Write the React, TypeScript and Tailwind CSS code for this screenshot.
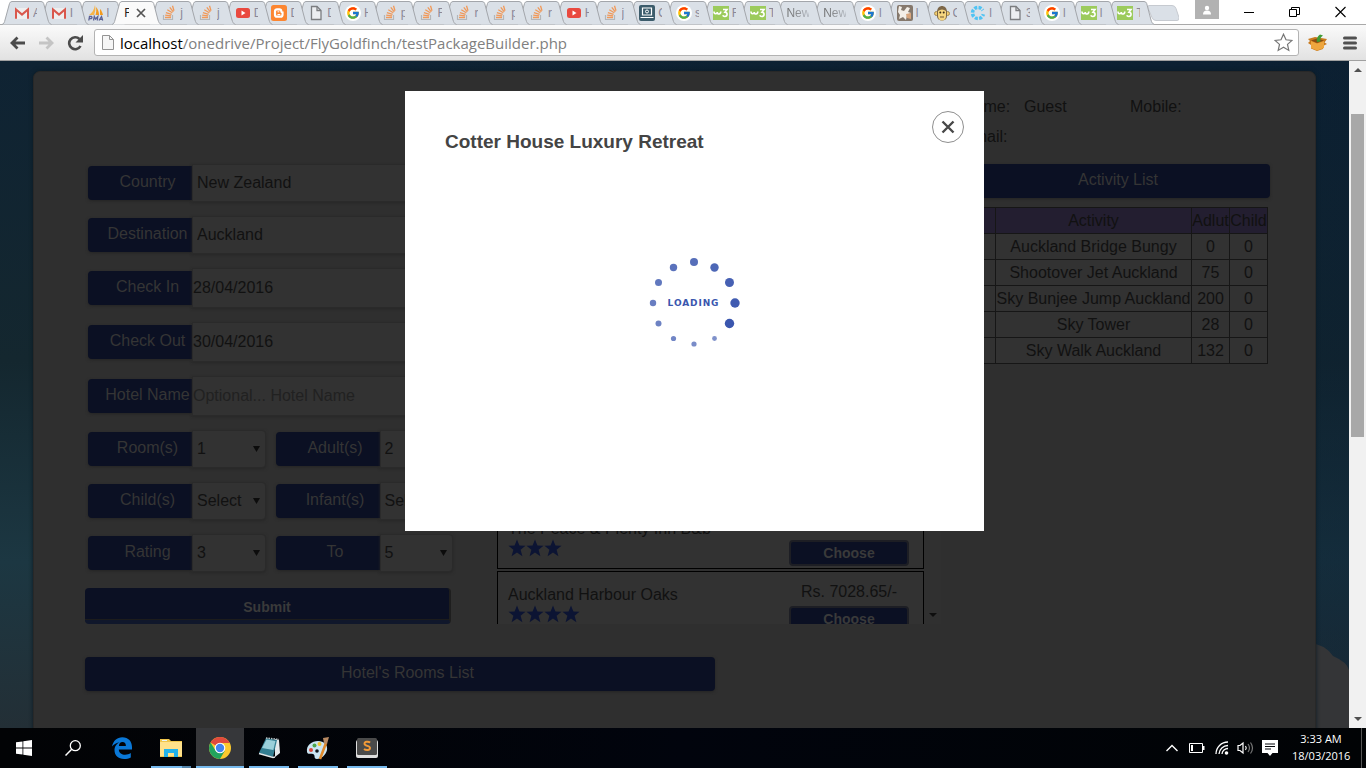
import React from "react";
import { FcGoogle } from "react-icons/fc";

/* ---------- favicons ---------- */

function GmailIcon() {
  return (
    <svg width="16" height="16" viewBox="0 0 16 16">
      <rect x="1" y="3" width="14" height="11" rx="1" fill="#eeeeee" />
      <path d="M2 13.800V4.500L8 9.600l6-5.100v9.300" fill="none" stroke="#d9574c" strokeWidth="2" />
    </svg>
  );
}

function PmaIcon() {
  return (
    <svg width="16" height="16" viewBox="0 0 16 16">
      <path d="M7 0c1 4 0 7-1 10H1c3-2 5-5 6-10z" fill="#f6b44a" />
      <path d="M8 2c2 2 3 5 3 8H7.500c.8-2 1-5 .5-8zM12 4c1.500 1 2.500 4 3 6h-3z" fill="#f39a1e" />
      <path d="M.8 15.500l.7-4h2q1.200 1-.3 2.200H1.500M5.500 15.500l.8-4 1.300 2.500 2.200-2.500-.5 4M11 15.500l2.500-4 1.200 4M12 14.300h2.500" fill="none" stroke="#5c6296" strokeWidth="1.300" />
    </svg>
  );
}

function StackIcon() {
  return (
    <svg width="16" height="16" viewBox="0 0 16 16">
      <path d="M2.500 10v4.500h9V10" fill="none" stroke="#b4b6b9" strokeWidth="1.200" />
      <path d="M4 12.500h6M4.200 10.200l5.900.6M4.900 7.600l5.700 1.700M6.300 4.800l5 3M8.800 2.300l3.500 4.500M11.500.7l1.500 5" fill="none" stroke="#f0995a" strokeWidth="1.300" />
    </svg>
  );
}

function YoutubeIcon() {
  return (
    <svg width="16" height="16" viewBox="0 0 16 16">
      <rect x="1" y="3" width="14" height="10" rx="2.500" fill="#e9493f" />
      <path d="M6.500 5.500v5l4-2.500z" fill="#fff" />
    </svg>
  );
}

function BloggerIcon() {
  return (
    <svg width="16" height="16" viewBox="0 0 16 16">
      <rect width="16" height="16" rx="2.500" fill="#fc8631" />
      <path d="M6 4.300h2.300a2 2 0 0 1 2 2c0 1 .3 1 1.200 1.200v2.200a2 2 0 0 1-2 2H6a2 2 0 0 1-2-2V6.300a2 2 0 0 1 2-2z" fill="none" stroke="#fff" strokeWidth="2.200" />
      <path d="M6.500 6.800h1.800M6.500 9.500h2.800" stroke="#fff" strokeWidth="1" />
    </svg>
  );
}

function PageIcon() {
  return (
    <svg width="16" height="16" viewBox="0 0 16 16">
      <path d="M3.500 1.500h5.500l4 4v9H3.500z" fill="#eceef1" stroke="#7b7d80" strokeWidth="1.300" />
      <path d="M9 1.500v4h4" fill="none" stroke="#7b7d80" strokeWidth="1.300" />
    </svg>
  );
}

function GoogleIcon() {
  return (
    <span className="flex size-4 shrink-0 items-center justify-center rounded-full bg-white">
      <FcGoogle size={14} />
    </span>
  );
}

function LaptopIcon() {
  return (
    <svg width="16" height="16" viewBox="0 0 16 16">
      <rect width="16" height="16" rx="2" fill="#3c5c6b" />
      <path d="M3.500 3h9v7h-9zM1.500 12.500h13" fill="none" stroke="#fff" strokeWidth="1.200" />
      <circle cx="8" cy="6.500" r="1.500" fill="none" stroke="#fff" />
    </svg>
  );
}

function W3Icon() {
  return (
    <svg width="16" height="16" viewBox="0 0 16 16">
      <rect y="1" width="16" height="14" fill="#9ccb5c" />
      <path d="M1 6.500c0 3 3 3 3.300.5 0 3 3.500 2.500 3.500-.5M10 4.500h4L12 7.200c2.800 0 2.800 4.300-.2 4.300-1.200 0-1.800-.5-2-1.200" fill="none" stroke="#fff" strokeWidth="1.600" />
    </svg>
  );
}

function PawIcon() {
  return (
    <svg width="16" height="16" viewBox="0 0 16 16">
      <rect width="16" height="16" rx="2" fill="#85786c" />
      <path d="M2 1l3 1-1 3 3 1 3-4 3 1-2 4 3 1-4 2-1 5-3-3-4 2 1-4-2-3z" fill="#f4efe8" />
      <path d="M9 9l5-1v6l-4-1z" fill="#d8a57c" />
    </svg>
  );
}

function MonkeyIcon() {
  return (
    <svg width="16" height="16" viewBox="0 0 16 16">
      <circle cx="2.500" cy="8.500" r="2" fill="#f1cd6c" stroke="#a48a55" />
      <circle cx="13.500" cy="8.500" r="2" fill="#f1cd6c" stroke="#a48a55" />
      <path d="M3 7c0-8 10-8 10 0v4c0 6-10 6-10 0z" fill="#7d6748" />
      <path d="M4 6q4-3 8 0v5c0 6-8 6-8 0z" fill="#f6d67e" />
      <circle cx="6.300" cy="7.500" r="1" fill="#3b2d1b" />
      <circle cx="9.700" cy="7.500" r="1" fill="#3b2d1b" />
      <path d="M6 12h4" stroke="#6d5535" />
    </svg>
  );
}

function DotsIcon() {
  return (
    <svg width="16" height="16" viewBox="0 0 16 16">
      <circle cx="8" cy="8" r="5.500" fill="none" stroke="#4fc3f3" strokeWidth="3.500" strokeDasharray="3 1.300" />
      <path d="M9 8l7-5v7z" fill="#dae0e7" />
    </svg>
  );
}

type Kind = "gmail" | "pma" | "so" | "yt" | "blog" | "page" | "google" | "laptop" | "w3" | "paw" | "monkey" | "dots" | "none";

const FAVICONS: Record<Kind, React.ReactNode> = {
  gmail: <GmailIcon />,
  pma: <PmaIcon />,
  so: <StackIcon />,
  yt: <YoutubeIcon />,
  blog: <BloggerIcon />,
  page: <PageIcon />,
  google: <GoogleIcon />,
  laptop: <LaptopIcon />,
  w3: <W3Icon />,
  paw: <PawIcon />,
  monkey: <MonkeyIcon />,
  dots: <DotsIcon />,
  none: null,
};

const TABS: [Kind, string, boolean?][] = [
  ["gmail", "A"], ["gmail", "I"], ["pma", "l"], ["none", "F", true],
  ["so", "j"], ["so", "j"], ["yt", "D"], ["blog", "D"], ["page", "D"], ["google", "H"],
  ["so", "p"], ["so", "F"], ["so", "r"], ["so", "p"], ["so", "r"], ["yt", "H"], ["so", "j"],
  ["laptop", "C"], ["google", "s"], ["w3", "F"], ["w3", "T"], ["none", "New"], ["none", "New"],
  ["google", "l"], ["paw", "l"], ["monkey", "C"], ["dots", "l"], ["page", "3"], ["google", "l"],
  ["w3", "l"], ["w3", "T"],
];

function TabStrip() {
  return (
    <div className="flex h-6 shrink-0 bg-white pl-[2px]">
      <div className="flex min-w-0 flex-1" role="tablist">
        {TABS.map(([kind, title, active], i) => (
          <div
            key={i}
            role="tab"
            aria-selected={!!active}
            className="relative h-6 min-w-0 flex-1"
            style={{ zIndex: active ? 50 : 40 - i }}
          >
            <svg className="absolute top-0 left-0" width="50" height="25" viewBox="0 0 50 25">
              <path
                d="M0 24.500 C2 24 2.500 22 3 20 L7.500 3.500 Q8.200 1.500 10 1.500 H39 Q41 1.500 41.700 3.500 L46 20 C46.600 22 47.500 24 49.500 24.500"
                fill={active ? "#fafafa" : "#dae0e7"}
                stroke="#a3a6ab"
              />
            </svg>
            <div className="relative flex h-6 items-center gap-[3px] pt-[2px] pl-3">
              {FAVICONS[kind]}
              {active ? (
                <>
                  <span className="w-[5px] overflow-hidden text-xs text-[#222]">{title}</span>
                  <button aria-label="Close tab" className="ml-1">
                    <svg width="10" height="10" viewBox="0 0 10 10">
                      <path d="M1 1l8 8M9 1l-8 8" stroke="#555" strokeWidth="1.700" />
                    </svg>
                  </button>
                </>
              ) : (
                <span
                  className={
                    kind === "none"
                      ? "w-[23px] overflow-hidden bg-linear-to-r from-[#666] to-[#b5bac2] bg-clip-text text-xs text-transparent"
                      : "w-1 overflow-hidden text-xs text-[#8b8898]"
                  }
                >
                  {title}
                </span>
              )}
            </div>
          </div>
        ))}
      </div>
      <div className="flex w-[224px] shrink-0 justify-between pr-5 pl-[5px]">
        <div className="flex gap-4">
          <button aria-label="New tab" className="mt-[5px] h-4">
            <svg width="32" height="16" viewBox="0 0 32 16">
              <path d="M2 .5h23q3 0 4 3l3 9q.5 3-2 3H9q-3 0-4-3L1 3Q.5.500 2 .5z" fill="#dae0e7" stroke="#c6cad0" />
            </svg>
          </button>
          <button aria-label="Profile" className="flex h-[19px] w-6 items-center justify-center bg-[#b2b2b2]">
            <svg width="10" height="10" viewBox="0 0 10 10">
              <circle cx="5" cy="3" r="2.200" fill="#fff" />
              <path d="M1 9.500q0-4 4-4t4 4z" fill="#fff" />
            </svg>
          </button>
        </div>
        <div className="flex items-center gap-[35px]">
          <button aria-label="Minimize">
            <svg width="10" height="12" viewBox="0 0 10 12"><path d="M0 6.500h10" stroke="#000" /></svg>
          </button>
          <button aria-label="Restore">
            <svg width="11" height="12" viewBox="0 0 11 12">
              <path d="M.5 3.500h7v7h-7zM2.500 3V1.500h8v7H8" fill="none" stroke="#000" />
            </svg>
          </button>
          <button aria-label="Close window">
            <svg width="11" height="12" viewBox="0 0 11 12"><path d="M.5 1l10 10M10.500 1l-10 10" stroke="#000" strokeWidth="1.100" /></svg>
          </button>
        </div>
      </div>
    </div>
  );
}

function Toolbar() {
  return (
    <div className="flex h-[37px] shrink-0 items-center border-t border-b border-t-[#a9a9a9] border-b-[#a0a0a0] bg-linear-to-b from-[#fafafa] to-[#e2e2e2] pr-[9px] pl-[9px]">
      <div className="flex w-[85px] shrink-0 gap-3">
        <button aria-label="Back">
          <svg width="17" height="16" viewBox="0 0 17 16"><path d="M16 8H3M8.500 2.500L3 8l5.500 5.500" fill="none" stroke="#4b4b4b" strokeWidth="2.800" /></svg>
        </button>
        <button aria-label="Forward">
          <svg width="17" height="16" viewBox="0 0 17 16"><path d="M1 8h13M8.500 2.500L14 8l-5.500 5.500" fill="none" stroke="#c4c4c4" strokeWidth="2.800" /></svg>
        </button>
        <button aria-label="Reload">
          <svg width="17" height="16" viewBox="0 0 17 16">
            <path d="M13.500 11A6 6 0 1 1 12.500 4" fill="none" stroke="#4b4b4b" strokeWidth="2.600" />
            <path d="M16 0v7.500H8.500z" fill="#4b4b4b" />
          </svg>
        </button>
      </div>
      <div className="flex h-[27px] min-w-0 flex-1 items-center rounded-[3px] border border-[#b3b3b3] bg-white px-[5px]">
        <svg width="16" height="18" viewBox="0 0 16 18" className="shrink-0">
          <path d="M2.500 1.500h7l4 4v10h-11z" fill="#f6f6f6" stroke="#949494" />
          <path d="M9.500 1.500v4h4" fill="none" stroke="#949494" />
        </svg>
        <div className="min-w-0 flex-1 pl-1 font-['Open_Sans','Noto_Sans',sans-serif] text-[15px] leading-5 whitespace-nowrap text-[#808080]">
          <span className="text-black">localhost</span>/onedrive/Project/FlyGoldfinch/testPackageBuilder.php
        </div>
        <button aria-label="Bookmark this page">
          <svg width="19" height="19" viewBox="0 0 19 19">
            <path d="M9.500 1.200l2.500 5.600 6 .6-4.500 4 1.300 6-5.300-3.100-5.300 3.100 1.300-6-4.500-4 6-.6z" fill="none" stroke="#757575" strokeWidth="1.200" />
          </svg>
        </button>
      </div>
      <div className="flex shrink-0 items-center gap-4 pl-[9px]">
        <button aria-label="Extension">
          <svg width="19" height="17" viewBox="0 0 19 17">
            <path d="M0 5l7-2 12 2-2.500 3.500L19 10l-4 2v3l-6 2-6-2.500V11L0 9l2-2z" fill="#c87a1e" />
            <path d="M3 7l6 2.500L16 7v7l-7 2.500L3 14z" fill="#eea63e" />
            <path d="M3 6.500l6-2 7 2-7 2.500z" fill="#8a4d12" />
            <path d="M9 8q-1-5 3-7.500l3 1q-3.500 2-2.500 6z" fill="#3f9d35" />
          </svg>
        </button>
        <button aria-label="Menu">
          <svg width="14" height="14" viewBox="0 0 14 14">
            <path d="M1.500 2h11M1.500 7h11M1.500 12h11" stroke="#505050" strokeWidth="3" strokeLinecap="round" />
          </svg>
        </button>
      </div>
    </div>
  );
}

/* ---------- booking form ---------- */

function Label({ htmlFor, children }: { htmlFor: string; children: React.ReactNode }) {
  return (
    <label
      htmlFor={htmlFor}
      className="flex h-[34px] w-[104px] shrink-0 items-center justify-center rounded-l-[4px] bg-[#0b1023] pb-[2px] pl-[15px] whitespace-nowrap text-[#353535] shadow-[0_1px_3px_#242424]"
    >
      {children}
    </label>
  );
}

function Arrow() {
  return (
    <svg className="pointer-events-none absolute top-4 right-[6px]" width="7" height="6" viewBox="0 0 7 6">
      <path d="M0 0h7L3.500 6z" fill="#0c0c0c" />
    </svg>
  );
}

function SelectField({ label, value, wide }: { label: string; value: string; wide?: boolean }) {
  return (
    <div className={wide ? "flex items-center" : "flex flex-1 items-center"}>
      <Label htmlFor={label}>{label}</Label>
      <div className="relative flex-1">
        <select
          id={label}
          className="block h-[38px] w-full appearance-none rounded-r-[4px] border border-[#2a2a2a] bg-[#323232] pl-1 text-[#111] shadow-[0_1px_3px_#272727]"
        >
          <option>{value}</option>
        </select>
        <Arrow />
      </div>
    </div>
  );
}

function TextField({ label, value, placeholder }: { label: string; value?: string; placeholder?: string }) {
  return (
    <div className="flex items-center">
      <Label htmlFor={label}>{label}</Label>
      <input
        id={label}
        defaultValue={value}
        placeholder={placeholder}
        className="block h-10 min-w-0 flex-1 rounded-r-[4px] border border-[#2a2a2a] bg-[#323232] text-[#111] shadow-[0_1px_3px_#272727] placeholder:text-[#212121]"
      />
    </div>
  );
}

function SearchForm() {
  return (
    <form className="w-[368px] shrink-0 pt-[92px]" onSubmit={(e) => e.preventDefault()}>
      <div className="flex flex-col gap-[14px] pl-[3px]">
        <SelectField wide label="Country" value="New Zealand" />
        <SelectField wide label="Destination" value="Auckland" />
        <TextField label="Check In" value="28/04/2016" />
        <TextField label="Check Out" value="30/04/2016" />
        <TextField label="Hotel Name" placeholder="Optional... Hotel Name" />
        <div className="flex gap-[10px]">
          <SelectField label="Room(s)" value="1" />
          <SelectField label="Adult(s)" value="2" />
        </div>
        <div className="flex gap-[10px]">
          <SelectField label="Child(s)" value="Select" />
          <SelectField label="Infant(s)" value="Select" />
        </div>
        <div className="flex gap-[10px]">
          <SelectField label="Rating" value="3" />
          <SelectField label="To" value="5" />
        </div>
      </div>
      <div className="pt-4 pr-[2px]">
        <button className="block h-9 w-full rounded-[4px] border-r-2 border-b-4 border-r-[#1e1e1e] border-b-[#10172b] bg-[#0b1023] pt-[6px] text-sm font-bold text-[#3a3a3a] shadow-[inset_0_-1px_0_#1c1c1c]">
          Submit
        </button>
      </div>
    </form>
  );
}

/* ---------- hotel list ---------- */

function Star() {
  return (
    <svg width="18" height="18" viewBox="0 0 18 18">
      <path d="M9 .5l2.400 6 6.100.3-4.900 3.900 1.800 6.500L9 13.400l-5.400 3.800 1.800-6.500L.5 6.800l6.100-.3z" fill="#0c1433" />
    </svg>
  );
}

function HotelCard({ name, stars, price }: { name: string; stars: number; price?: string }) {
  return (
    <div className="flex h-16 shrink-0 justify-between border border-black bg-[#323232] pr-[14px] pl-[10px]">
      <div className="flex flex-col pt-[13px]">
        <span className="leading-5">{name}</span>
        <span className="flex">
          {Array.from({ length: stars }, (_, i) => <Star key={i} />)}
        </span>
      </div>
      <div className="flex w-[120px] flex-col items-center pt-[10px]">
        <span className="h-5 leading-5">{price}</span>
        <button className="mt-1 h-[26px] w-full rounded-[4px] border-2 border-[#1d1e24] bg-[#0b1023] text-sm leading-5 font-bold text-[#3a3a3a]">
          Choose
        </button>
      </div>
    </div>
  );
}

function HotelList() {
  return (
    <div className="mt-[433px] ml-11 flex h-[119px] min-w-0 flex-1 overflow-hidden bg-[#303030]">
      <div className="flex min-w-0 flex-1 flex-col gap-[2px]">
        <HotelCard name="The Peace & Plenty Inn B&b" stars={3} />
        <HotelCard name="Auckland Harbour Oaks" stars={4} price="Rs. 7028.65/-" />
      </div>
      <div className="flex w-[17px] items-end justify-center pb-[7px]">
        <svg width="8" height="4" viewBox="0 0 8 4"><path d="M0 0h8L4 4z" fill="#0e0e0e" /></svg>
      </div>
    </div>
  );
}

/* ---------- activities ---------- */

const ACTIVITIES: [string, number, number][] = [
  ["Auckland Bridge Bungy", 0, 0],
  ["Shootover Jet Auckland", 75, 0],
  ["Sky Bunjee Jump Auckland", 200, 0],
  ["Sky Tower", 28, 0],
  ["Sky Walk Auckland", 132, 0],
];

function ActivityPanel() {
  const cell = "h-[26px] border border-[#161616] p-0 text-center font-normal leading-5 whitespace-nowrap";
  return (
    <div className="ml-[10px] w-[319px] shrink-0 pt-5">
      <div className="grid grid-cols-[61px_106px_1fr] pl-3 leading-[30px]">
        <span>Name:</span>
        <span>Guest</span>
        <span>Mobile:</span>
        <span>Email:</span>
      </div>
      <div className="mt-3 flex h-[34px] items-center justify-center rounded-[4px] bg-[#0b1023] pb-[2px] pl-[15px] text-[#353535] shadow-[0_1px_3px_#242424]">
        Activity List
      </div>
      <div className="pt-[9px] pr-[2px]">
        <table className="w-full table-fixed border-collapse border border-black bg-[#323232]">
          <colgroup>
            <col />
            <col className="w-[196px]" />
            <col className="w-[38px]" />
            <col className="w-[38px]" />
          </colgroup>
          <thead>
            <tr className="bg-[#231e30]">
              <th className={cell} />
              <th className={cell}>Activity</th>
              <th className={cell}>Adlut</th>
              <th className={cell}>Child</th>
            </tr>
          </thead>
          <tbody>
            {ACTIVITIES.map(([name, adults, children]) => (
              <tr key={name}>
                <td className={cell} />
                <td className={cell}>{name}</td>
                <td className={cell}>{adults}</td>
                <td className={cell}>{children}</td>
              </tr>
            ))}
          </tbody>
        </table>
      </div>
    </div>
  );
}

/* ---------- modal ---------- */

const DOTS: [number, number, number, number][] = [
  [50, 9, 4, 0.86], [70.500, 14.500, 4.200, 0.9], [85.500, 29.500, 4.500, 0.94], [91, 50, 4.700, 0.97],
  [85.500, 70.500, 4.700, 1], [70.500, 85.500, 2.400, 0.65], [50, 91, 2.600, 0.68], [29.500, 85.500, 2.600, 0.72],
  [14.500, 70.500, 3, 0.74], [9, 50, 3.200, 0.77], [14.500, 29.500, 3.500, 0.8], [29.500, 14.500, 3.700, 0.83],
];

function Modal() {
  return (
    <div className="absolute inset-0 flex items-start justify-center pt-[30px] pl-10">
      <div role="dialog" aria-labelledby="dialog-title" className="flex h-[440px] w-[579px] flex-col bg-white">
        <div className="flex items-start justify-between pt-5 pr-5 pl-10">
          <h3 id="dialog-title" className="pt-[19px] text-[19px] leading-6 font-bold text-[#444]">
            Cotter House Luxury Retreat
          </h3>
          <button aria-label="Close" className="flex size-8 items-center justify-center rounded-full border border-[#8f8f8f]">
            <svg width="14" height="14" viewBox="0 0 14 14">
              <path d="M1.500 1.500l11 11M12.500 1.500l-11 11" stroke="#484848" strokeWidth="2.400" />
            </svg>
          </button>
        </div>
        <div className="flex justify-center pt-[99px] pr-[2px]">
          <div className="relative flex size-[100px] items-center justify-center">
            <svg className="absolute inset-0" width="100" height="100" viewBox="0 0 100 100">
              {DOTS.map(([x, y, r, o], i) => <circle key={i} cx={x} cy={y} r={r} fill="#3a56ae" opacity={o} />)}
            </svg>
            <span className="font-['DejaVu_Sans',sans-serif] text-[9px] leading-3 font-bold tracking-widest text-[#3a56ae]">
              LOADING
            </span>
          </div>
        </div>
      </div>
    </div>
  );
}

function Scrollbar() {
  return (
    <div className="flex w-[17px] shrink-0 flex-col items-center bg-[#f1f1f1]">
      <svg className="mt-[7px] shrink-0" width="8" height="4" viewBox="0 0 8 4"><path d="M0 4h8L4 0z" fill="#505050" /></svg>
      <div className="mt-[42px] h-[323px] w-[13px] bg-[#a8a8a8]" />
      <svg className="mt-auto mb-[7px] shrink-0" width="8" height="4" viewBox="0 0 8 4"><path d="M0 0h8L4 4z" fill="#505050" /></svg>
    </div>
  );
}

/* ---------- taskbar ---------- */

function TaskButton({ label, open, active, stacked, children }: { label: string; open?: boolean; active?: boolean; stacked?: boolean; children: React.ReactNode }) {
  return (
    <button
      aria-label={label}
      className={
        active
          ? "relative flex h-10 w-12 items-center justify-center bg-[#36373a]"
          : "relative flex h-10 w-12 items-center justify-center"
      }
    >
      {children}
      {open && <span className={active ? "absolute inset-x-0 bottom-0 h-[2px] bg-[#76b9ed]" : "absolute inset-x-1 bottom-0 h-[2px] bg-[#76b9ed]"} />}
      {stacked && <span className="absolute right-1 bottom-0 h-[2px] w-[9px] bg-[#5384aa]" />}
    </button>
  );
}

function Taskbar() {
  return (
    <div className="flex h-10 shrink-0 items-center justify-between bg-linear-to-r from-[#020305] via-[#01040d] to-[#010305] pr-1 text-white">
      <div className="flex gap-px">
        <TaskButton label="Start">
          <svg width="16" height="16" viewBox="0 0 16 16">
            <path d="M0 2.300l6.500-.9v6.200H0zM7.300 1.300L16 0v7.600H7.300zM0 8.400h6.500v6.200L0 13.700zM7.300 8.400H16V16l-8.700-1.300z" fill="#fff" />
          </svg>
        </TaskButton>
        <TaskButton label="Search">
          <svg width="16" height="16" viewBox="0 0 16 16">
            <circle cx="10.300" cy="5.700" r="5" fill="none" stroke="#fff" strokeWidth="1.300" />
            <path d="M6.700 9.300L.5 15.500" stroke="#fff" strokeWidth="1.500" />
          </svg>
        </TaskButton>
        <TaskButton label="Edge">
          <svg width="20" height="22" viewBox="0 0 20 22">
            <path d="M0 9.500C1.200 3.700 5 .2 10.300.2 16.500.2 20 4.500 20 10v2.500H6.800c.2 3.800 3.200 5.200 6.200 5.200 2.300 0 4.200-.6 5.800-1.600v4.300c-1.900 1-4.300 1.500-6.700 1.500-6 0-9.600-3.500-9.600-8.700 0-3.900 2.300-7 5.600-8.300C4.500 5.600 1.800 7 0 9.500zM6.900 9h7c0-2.500-1.200-4-3.400-4S7.200 6.600 6.900 9z" fill="#0a78d7" />
          </svg>
        </TaskButton>
        <TaskButton label="File Explorer" open stacked>
          <svg width="22" height="20" viewBox="0 0 22 20">
            <path d="M0 1h9l2 2h11v16H0z" fill="#f0c64c" />
            <path d="M0 4h22v14H0z" fill="#ffe18a" />
            <path d="M4 19v-8h14v8h-4v-4H8v4z" fill="#22b2ea" />
            <path d="M2 2.500h5" stroke="#e9f6fb" />
          </svg>
        </TaskButton>
        <TaskButton label="Chrome" open active>
          <svg width="22" height="22" viewBox="0 0 22 22">
            <circle cx="11" cy="11" r="11" fill="#fbc92e" />
            <path d="M11 11L1.500 5.500A11 11 0 0 1 20.500 5.500L20.800 6H11z" fill="#e04a3d" />
            <path d="M1.500 5.500A11 11 0 0 0 11 22l4.800-8.300-9.200-.2z" fill="#22a35d" />
            <circle cx="11" cy="11" r="5.300" fill="#fff" />
            <circle cx="11" cy="11" r="4.200" fill="#4384ef" />
          </svg>
        </TaskButton>
        <TaskButton label="Notepad" open>
          <svg width="23" height="22" viewBox="0 0 23 22">
            <path d="M17 2l4 1 1 13-5 4z" fill="#e3e9eb" />
            <path d="M8 1l11 2-4 17L1 16z" fill="#347f92" />
            <path d="M8.500 2.500l9 1.500-2.200 9L4 11z" fill="#9ad0da" />
            <path d="M1 16.500l14 4 2-.5" fill="none" stroke="#e3e9eb" strokeWidth="1.500" />
            <path d="M8 1l13 1.500" stroke="#b9c3c6" strokeWidth="1.500" strokeDasharray="1.500 1" />
          </svg>
        </TaskButton>
        <TaskButton label="Paint" open>
          <svg width="24" height="23" viewBox="0 0 24 23">
            <path d="M1 15C0 8 6 4 12 4s10 4 9 9-6 9-10 9c-4 0-1-4-4-5s-5 1-6-2z" fill="#cbe5f3" />
            <circle cx="5" cy="13" r="2" fill="#d9483b" />
            <circle cx="8.500" cy="8.500" r="2" fill="#4ca64a" />
            <circle cx="13.500" cy="7" r="2" fill="#f1c231" />
            <circle cx="11" cy="14" r="1.800" fill="#11161c" />
            <path d="M20 6l-6 16" stroke="#e08a2c" strokeWidth="2.500" />
            <path d="M17 1l6-1-2 7-3-1z" fill="#b98a62" />
          </svg>
        </TaskButton>
        <TaskButton label="Sublime Text" open>
          <svg width="24" height="22" viewBox="0 0 24 22">
            <rect x="1" y="3" width="22" height="18" rx="2" fill="#dedede" />
            <rect x="2" y="1" width="20" height="17" rx="1.500" fill="#4a4a4a" />
            <path d="M15.200 5.500c-1.800-1.200-5.700-1.200-5.700 1.300s5.500 1.700 5.500 4.200-4.200 2.500-6 1" fill="none" stroke="#f29a38" strokeWidth="1.900" />
          </svg>
        </TaskButton>
      </div>
      <div className="flex items-center">
        <div className="flex items-center gap-2 pr-[14px]">
          <svg width="14" height="14" viewBox="0 0 14 14"><path d="M1.500 10L7 4.500l5.500 5.500" fill="none" stroke="#fff" strokeWidth="1.400" /></svg>
          <svg className="ml-[2px]" width="16" height="10" viewBox="0 0 16 10">
            <path d="M.5.500h13v9H.5z" fill="none" stroke="#fff" />
            <path d="M14 3h1.500v4H14zM2 2h2v6H2z" fill="#fff" />
          </svg>
          <svg className="ml-[2px]" width="14" height="14" viewBox="0 0 14 14">
            <path d="M1 13A12 12 0 0 1 13 1M4 13a9 9 0 0 1 9-8.500M7 13a6 6 0 0 1 6-5.500" fill="none" stroke="#fff" strokeWidth="1.300" />
            <circle cx="11.500" cy="12" r="1.800" fill="#fff" />
          </svg>
          <svg width="17" height="14" viewBox="0 0 17 14">
            <path d="M1 4.500h2L6 2v10L3 9.500H1z" fill="none" stroke="#fff" strokeWidth="1.200" />
            <path d="M8.500 5q1.500 2 0 4" fill="none" stroke="#fff" strokeWidth="1.200" />
            <path d="M11 3q3 4 0 8M13.500 1.500q4 5.500 0 11" fill="none" stroke="#777" strokeWidth="1.200" />
          </svg>
          <svg width="16" height="16" viewBox="0 0 16 16">
            <path d="M0 0h16v13h-5.500L8 16l-2.500-3H0z" fill="#fff" />
            <path d="M3 4h10M3 6.500h10M3 9h6" stroke="#05070b" />
          </svg>
        </div>
        <div className="w-[58px] pb-[2px] text-center font-['Open_Sans','Noto_Sans',sans-serif] text-[11px] leading-[17px] whitespace-nowrap">
          <div>3:33 AM</div>
          <div>18/03/2016</div>
        </div>
        <div className="ml-[11px] h-10 w-px bg-[#555]" />
      </div>
    </div>
  );
}

export default function App() {
  return (
    <div className="flex h-screen min-w-[1200px] flex-col overflow-hidden font-['Liberation_Sans',Arial,sans-serif] text-base">
      <TabStrip />
      <Toolbar />
      <div className="flex min-h-0 flex-1">
        <main className="relative min-w-0 flex-1 overflow-hidden bg-[linear-gradient(90deg,transparent,#061a3060),linear-gradient(180deg,#0f2333,#14272f_45%,#1c3742_75%,#232f36)] text-[#111]">
          <svg className="absolute right-0 bottom-0" width="40" height="90" viewBox="0 0 40 90">
            <path d="M0 5Q16 6 24 18q14 6 16 14v58H0z" fill="#343537" />
          </svg>
          <div className="relative mx-[33px] mt-[10px] h-full rounded-t-[7px] border border-[#282828] bg-[#2f2f2f] pr-[45px] pl-[51px] shadow-[0_0_4px_#0b1a24]">
            <div className="flex items-start">
              <SearchForm />
              <HotelList />
              <ActivityPanel />
            </div>
            <div className="mt-[33px] flex h-[34px] w-[630px] items-center justify-center rounded-[4px] bg-[#0b1023] pb-[2px] pl-[15px] text-[#353535] shadow-[0_1px_3px_#242424]">
              Hotel's Rooms List
            </div>
          </div>
          <Modal />
        </main>
        <Scrollbar />
      </div>
      <Taskbar />
    </div>
  );
}
